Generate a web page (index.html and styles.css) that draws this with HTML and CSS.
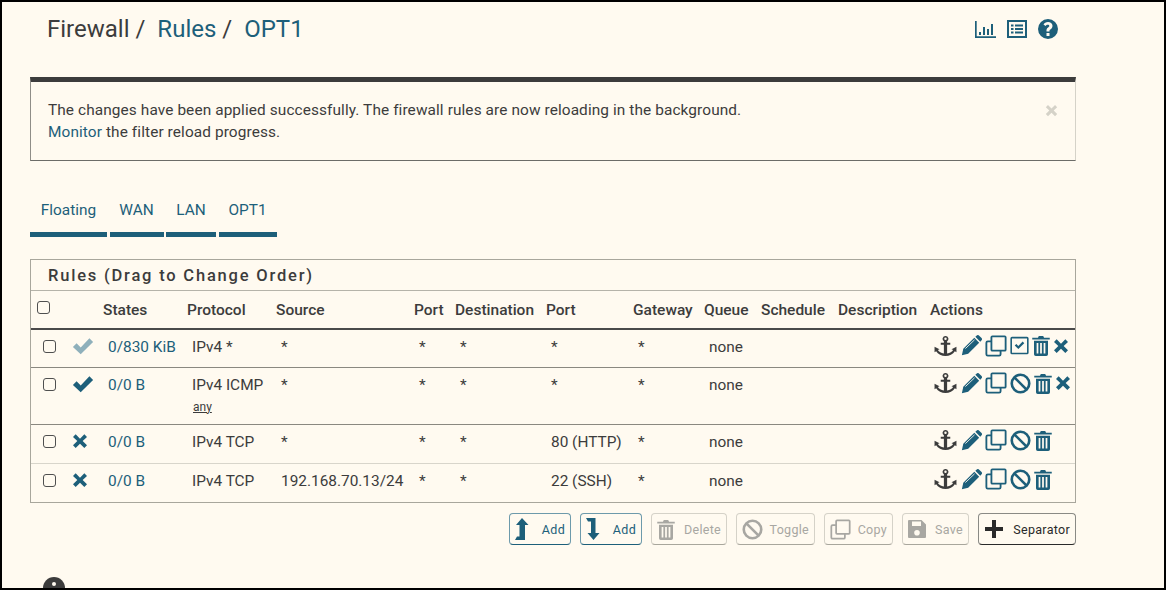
FILE: index.html

```html
<!doctype html>
<html>
<head>
    <title>Firewall: Rules: OPT1</title>
    <link rel="stylesheet" href="styles.css">
</head>
<body>
    <svg class="defs" width="0" height="0">
        <symbol id="i-check" viewBox="0 0 24 24"><polygon points="1,13 5,9 9.500,13.500 19,3.500 23,7.500 9.500,21"/></symbol>
        <symbol id="i-times" viewBox="0 0 24 24"><polygon points="5.500,2 12,8.500 18.500,2 22.500,6 16,12 22.500,18.500 18.500,22.500 12,16 5.500,22.500 1.500,18.500 8,12 1.500,6"/></symbol>
        <symbol id="i-anchor" viewBox="0 0 24 21"><path fill-rule="evenodd" d="M12 0a3 3 0 0 1 1.700 5.500V7H17V9.300H13.700V18.400C16.500 18 19 16.800 20 14.800L18.300 13.800 23.500 11.200V17L21.800 16C20 19 16 21 12 21S4 19 2.200 16L.5 17V11.200L5.700 13.800 4 14.800C5 16.800 7.500 18 10.300 18.400V9.300H7V7H10.300V5.500A3 3 0 0 1 12 0ZM12 1.700A1.300 1.300 0 1 0 12 4.300 1.300 1.300 0 0 0 12 1.700Z"/></symbol>
        <symbol id="i-pencil" viewBox="0 0 24 24"><path d="M1 23 2.600 15.800 15.200 3.200 20.800 8.800 8.200 21.400ZM16.400 2 18 .5C18.800-.2 19.800-.2 20.500.5L23.500 3.500C24.200 4.200 24.200 5.200 23.500 6L22 7.600Z"/><path class="cut" d="M5 15.500 15.500 5.500"/></symbol>
        <symbol id="i-clone" viewBox="0 0 24 24"><path class="line" d="M8 1.500H21.500A1 1 0 0 1 22.500 2.500V16A1 1 0 0 1 21.500 17H8A1 1 0 0 1 7 16V2.500A1 1 0 0 1 8 1.500ZM7 7H3A1.500 1.500 0 0 0 1.500 8.500V21A1.500 1.500 0 0 0 3 22.500H15.500A1.500 1.500 0 0 0 17 21V17"/></symbol>
        <symbol id="i-square-check" viewBox="0 0 24 24"><rect class="line" x="1.500" y="2" width="21" height="20" rx="1"/><polygon points="6,12 8,10 10.500,12.500 16,7 18,9 10.500,16.500"/></symbol>
        <symbol id="i-ban" viewBox="0 0 24 24"><circle class="line thick" cx="12" cy="12" r="10"/><path class="line thick" d="M5 5 19 19"/></symbol>
        <symbol id="i-trash" viewBox="0 0 20 24"><path fill-rule="evenodd" d="M0 3H6.500L7.500 1H12.500L13.500 3H20V5.200H0ZM2 6.500H18V22A2 2 0 0 1 16 24H4A2 2 0 0 1 2 22ZM5 9V21H7V9ZM9 9V21H11V9ZM13 9V21H15V9Z"/></symbol>
        <symbol id="i-up" viewBox="0 0 14 22"><polygon points="7,0 13.500,7 10,7 10,22 0,22 2,18.500 4.500,18.500 4.500,7 1,7"/></symbol>
        <symbol id="i-down" viewBox="0 0 14 22"><polygon points="0,0 9.500,0 9.500,15 13.500,15 7.500,22 1.500,15 5,15 5,3.500 2,3.500"/></symbol>
        <symbol id="i-plus" viewBox="0 0 18 18"><polygon points="7,0 11,0 11,7 18,7 18,11 11,11 11,18 7,18 7,11 0,11 0,7 7,7"/></symbol>
        <symbol id="i-save" viewBox="0 0 18 18"><path fill-rule="evenodd" d="M1 0H13.500L18 4.500V17A1 1 0 0 1 17 18H1A1 1 0 0 1 0 17V1A1 1 0 0 1 1 0ZM4 1.500V6H13V1.500ZM9 10A2.800 2.800 0 1 0 9 15.600 2.800 2.800 0 0 0 9 10Z"/></symbol>
    </svg>

    <div class="page">
        <header class="page-head">
            <h1 class="crumbs">
                <span>Firewall /</span>
                <a href="#">Rules <span>/</span></a>
                <a href="#">OPT1</a>
            </h1>
            <div class="head-icons">
                <svg class="head-icon chart" viewBox="0 0 21 17"><path d="M.7 0V16.300H21" class="line"/><path d="M4 11H6V14H4ZM8 6H10V14H8ZM12 8H14V14H12ZM16 3H18V14H16Z"/></svg>
                <svg class="head-icon list" viewBox="0 0 20 18"><rect class="line" x="1" y="1" width="18" height="16"/><path d="M4 4.500H6.500V6.500H4ZM8 4.500H16V6.500H8ZM4 8H6.500V10H4ZM8 8H16V10H8ZM4 11.500H6.500V13.500H4ZM8 11.500H16V13.500H8Z"/></svg>
                <svg class="head-icon help" viewBox="0 0 20 20"><path fill-rule="evenodd" d="M10 0A10 10 0 1 1 10 20 10 10 0 0 1 10 0ZM8.500 14V17H11.500V14ZM10 3C7.800 3 6.300 4 5.500 5.600L7.600 7.100C8.100 6.300 8.800 5.800 9.800 5.800 10.700 5.800 11.300 6.200 11.300 6.900 11.300 8.200 8.500 8.500 8.500 11.300V12.500H11.500V11.800C11.500 10.500 14.500 10 14.500 6.800 14.500 4.400 12.300 3 10 3Z"/></svg>
            </div>
        </header>

        <div class="alert">
            <button class="alert__close" type="button"><svg class="ico"><use href="#i-times"/></svg></button>
            <p>The changes have been applied successfully. The firewall rules are now reloading in the background.<br><a href="#">Monitor</a> the filter reload progress.</p>
        </div>

        <ul class="tabs">
            <li class="tabs__item tabs__item--floating"><a href="#">Floating</a></li>
            <li class="tabs__item tabs__item--wan"><a href="#">WAN</a></li>
            <li class="tabs__item tabs__item--lan"><a href="#">LAN</a></li>
            <li class="tabs__item tabs__item--opt"><a href="#">OPT1</a></li>
        </ul>

        <section class="panel">
            <h2 class="panel__title">Rules (Drag to Change Order)</h2>
            <table class="rules">
                <colgroup>
                    <col class="c-check"><col class="c-status"><col class="c-states"><col class="c-proto"><col class="c-source"><col class="c-port"><col class="c-dest"><col class="c-dport"><col class="c-gw"><col class="c-queue"><col class="c-sched"><col class="c-desc"><col class="c-actions">
                </colgroup>
                <thead>
                    <tr>
                        <th class="head-check"><input type="checkbox" class="box"></th>
                        <th></th>
                        <th>States</th>
                        <th>Protocol</th>
                        <th>Source</th>
                        <th>Port</th>
                        <th>Destination</th>
                        <th>Port</th>
                        <th>Gateway</th>
                        <th>Queue</th>
                        <th>Schedule</th>
                        <th>Description</th>
                        <th>Actions</th>
                    </tr>
                </thead>
                <tbody>
                    <tr>
                        <td class="cell-check"><input type="checkbox" class="box"></td>
                        <td><svg class="status status--off"><use href="#i-check"/></svg></td>
                        <td><a href="#">0/830 KiB</a></td>
                        <td>IPv4 *</td>
                        <td>*</td>
                        <td>*</td>
                        <td>*</td>
                        <td>*</td>
                        <td>*</td>
                        <td>none</td>
                        <td></td>
                        <td></td>
                        <td class="cell-actions">
                            <div class="actions">
                                <svg class="act act--anchor"><use href="#i-anchor"/></svg>
                                <svg class="act act--pencil"><use href="#i-pencil"/></svg>
                                <svg class="act act--clone"><use href="#i-clone"/></svg>
                                <svg class="act act--tick"><use href="#i-square-check"/></svg>
                                <svg class="act act--trash"><use href="#i-trash"/></svg>
                                <svg class="act act--times"><use href="#i-times"/></svg>
                            </div>
                        </td>
                    </tr>
                    <tr class="row-tall">
                        <td class="cell-check"><input type="checkbox" class="box"></td>
                        <td><svg class="status"><use href="#i-check"/></svg></td>
                        <td><a href="#">0/0 B</a></td>
                        <td>IPv4 ICMP<br><u class="sub">any</u></td>
                        <td>*</td>
                        <td>*</td>
                        <td>*</td>
                        <td>*</td>
                        <td>*</td>
                        <td>none</td>
                        <td></td>
                        <td></td>
                        <td class="cell-actions">
                            <div class="actions">
                                <svg class="act act--anchor"><use href="#i-anchor"/></svg>
                                <svg class="act act--pencil"><use href="#i-pencil"/></svg>
                                <svg class="act act--clone"><use href="#i-clone"/></svg>
                                <svg class="act act--ban"><use href="#i-ban"/></svg>
                                <svg class="act act--trash"><use href="#i-trash"/></svg>
                                <svg class="act act--times"><use href="#i-times"/></svg>
                            </div>
                        </td>
                    </tr>
                    <tr class="row-wide">
                        <td class="cell-check"><input type="checkbox" class="box"></td>
                        <td><svg class="status status--x"><use href="#i-times"/></svg></td>
                        <td><a href="#">0/0 B</a></td>
                        <td>IPv4 TCP</td>
                        <td>*</td>
                        <td>*</td>
                        <td>*</td>
                        <td>80 (HTTP)</td>
                        <td>*</td>
                        <td>none</td>
                        <td></td>
                        <td></td>
                        <td class="cell-actions">
                            <div class="actions">
                                <svg class="act act--anchor"><use href="#i-anchor"/></svg>
                                <svg class="act act--pencil"><use href="#i-pencil"/></svg>
                                <svg class="act act--clone"><use href="#i-clone"/></svg>
                                <svg class="act act--ban"><use href="#i-ban"/></svg>
                                <svg class="act act--trash"><use href="#i-trash"/></svg>
                            </div>
                        </td>
                    </tr>
                    <tr>
                        <td class="cell-check"><input type="checkbox" class="box"></td>
                        <td><svg class="status status--x"><use href="#i-times"/></svg></td>
                        <td><a href="#">0/0 B</a></td>
                        <td>IPv4 TCP</td>
                        <td>192.168.70.13/24</td>
                        <td>*</td>
                        <td>*</td>
                        <td>22 (SSH)</td>
                        <td>*</td>
                        <td>none</td>
                        <td></td>
                        <td></td>
                        <td class="cell-actions">
                            <div class="actions">
                                <svg class="act act--anchor"><use href="#i-anchor"/></svg>
                                <svg class="act act--pencil"><use href="#i-pencil"/></svg>
                                <svg class="act act--clone"><use href="#i-clone"/></svg>
                                <svg class="act act--ban"><use href="#i-ban"/></svg>
                                <svg class="act act--trash"><use href="#i-trash"/></svg>
                            </div>
                        </td>
                    </tr>
                </tbody>
            </table>
        </section>

        <div class="toolbar">
            <button class="btn btn--add" type="button"><svg class="btn__ico btn__ico--arrow"><use href="#i-up"/></svg>Add</button>
            <button class="btn btn--add" type="button"><svg class="btn__ico btn__ico--arrow"><use href="#i-down"/></svg>Add</button>
            <button class="btn btn--off btn--delete" type="button"><svg class="btn__ico btn__ico--trash"><use href="#i-trash"/></svg>Delete</button>
            <button class="btn btn--off btn--toggle" type="button"><svg class="btn__ico btn__ico--ban"><use href="#i-ban"/></svg>Toggle</button>
            <button class="btn btn--off btn--copy" type="button"><svg class="btn__ico btn__ico--clone"><use href="#i-clone"/></svg>Copy</button>
            <button class="btn btn--off btn--save" type="button"><svg class="btn__ico btn__ico--save"><use href="#i-save"/></svg>Save</button>
            <button class="btn btn--sep" type="button"><svg class="btn__ico btn__ico--plus"><use href="#i-plus"/></svg>Separator</button>
        </div>

        <div class="info-mark"></div>
    </div>
</body>
</html>
```

FILE: styles.css

```css
* {
    box-sizing: border-box;
}

html, body {
    margin: 0;
    height: 100%;
    overflow: hidden;
}

body {
    background: #fffaf0;
    color: #3c3c3c;
    font-family: Roboto, "Liberation Sans", sans-serif;
    font-size: 15.400px;
}

a {
    color: #1d5f7a;
    text-decoration: none;
}

.defs {
    position: absolute;
}

.line {
    fill: none;
    stroke: currentColor;
    stroke-width: 2;
}

.line.thick {
    stroke-width: 3;
}

.cut {
    fill: none;
    stroke: #fffaf0;
    stroke-width: 1;
}

.page {
    width: 1166px;
    height: 590px;
    border: 2px solid #000;
    padding: 0 88px 0 28px;
    overflow: hidden;
}

/*-------- Header --------*/

.page-head {
    display: flex;
    justify-content: space-between;
    height: 75px;
}

.crumbs {
    margin: 12px 0 0 17px;
    font-size: 24px;
    font-weight: 400;
    line-height: 30px;
    display: flex;
    gap: 12px;
}

.crumbs span {
    color: #3c3c3c;
}

.head-icons {
    display: flex;
    align-items: center;
    gap: 11px;
    height: 20px;
    margin: 17px 18px 0 0;
    color: #1d5f7a;
}

.head-icon {
    fill: currentColor;
    display: block;
}

.chart {
    width: 21px;
    height: 17px;
}

.list {
    width: 20px;
    height: 18px;
}

.help {
    width: 20px;
    height: 20px;
}

/*-------- Alert --------*/

.alert {
    position: relative;
    height: 84px;
    border: 1px solid #d5d2c8;
    border-top: 5px solid #3c3c3c;
    border-bottom-color: #6c6c68;
    border-left-color: #8f8d87;
    padding: 17px 17px;
    line-height: 22px;
    letter-spacing: .1px;
}

.alert p {
    margin: 0;
}

.alert__close {
    position: absolute;
    top: 22px;
    right: 17px;
    width: 13px;
    height: 13px;
    padding: 0;
    border: 0;
    background: none;
    color: #d5d2c8;
}

.ico {
    display: block;
    width: 13px;
    height: 13px;
    fill: currentColor;
}

/*-------- Tabs --------*/

.tabs {
    display: flex;
    gap: 2.500px;
    margin: 32px 0 0;
    padding: 0;
    list-style: none;
}

.tabs__item {
    border-bottom: 5px solid #1d5f7a;
    height: 44px;
    padding-top: 7px;
    line-height: 20px;
    text-align: center;
}

.tabs__item--floating { width: 77px; }
.tabs__item--wan { width: 54px; }
.tabs__item--lan { width: 50px; }
.tabs__item--opt { width: 58px; }

/*-------- Rules table --------*/

.panel {
    margin-top: 22px;
    border: 1px solid #a8a69c;
    height: 244px;
}

.panel__title {
    margin: 0;
    height: 31px;
    padding-left: 17px;
    border-bottom: 1px solid #b5b3a9;
    font-size: 16.500px;
    font-weight: 500;
    line-height: 31px;
    letter-spacing: 1.800px;
}

.rules {
    width: 1044px;
    table-layout: fixed;
    border-collapse: collapse;
}

.c-check { width: 35px; }
.c-status { width: 37px; }
.c-states { width: 84px; }
.c-proto { width: 89px; }
.c-source { width: 138px; }
.c-port { width: 41px; }
.c-dest { width: 91px; }
.c-dport { width: 87px; }
.c-gw { width: 71px; }
.c-queue { width: 57px; }
.c-sched { width: 77px; }
.c-desc { width: 92px; }
.c-actions { width: 145px; }

.rules th {
    height: 38px;
    padding: 0;
    border-bottom: 2px solid #4a4a4a;
    font-size: 15.500px;
    font-weight: 500;
    text-align: left;
    vertical-align: middle;
    white-space: nowrap;
}

.rules th.head-check {
    padding: 0 0 4px 6px;
}

.rules td {
    padding: 7px 0 0 5px;
    border-bottom: 1px solid #8a8880;
    font-size: 15.400px;
    line-height: 20px;
    height: 38px;
    vertical-align: top;
    white-space: nowrap;
}

.rules tr:last-child td {
    border-bottom: 0;
}

.rules .row-wide td {
    height: 39px;
    border-bottom-color: #d8d5cb;
}

.rules .row-tall td {
    height: 57px;
}

.rules td.cell-check {
    padding: 10px 0 0 12px;
}

.rules td.cell-actions {
    padding: 5px 0 0 4px;
}

.sub {
    display: inline-block;
    margin: 4px 0 0 1px;
    font-size: 12px;
    line-height: 16px;
}

.box {
    display: block;
    margin: 0;
    width: 13px;
    height: 13px;
    appearance: none;
    background: transparent;
    border: 1.500px solid #4f4f4f;
    border-radius: 3px;
}

.status {
    display: block;
    width: 22px;
    height: 22px;
    margin: -2px 0 0 1px;
    fill: #1d5f7a;
}

.status--off {
    fill: #8fb0bb;
}

.status--x {
    width: 16px;
    height: 16px;
    margin-top: 1px;
}

.actions {
    display: flex;
    align-items: center;
    gap: 3.500px;
    height: 21px;
    color: #1d5f7a;
}

.act {
    display: block;
    flex: none;
    fill: currentColor;
}

.act--anchor {
    width: 23px;
    height: 20px;
    fill: #3c3c3c;
}

.act--pencil,
.act--ban {
    width: 21px;
    height: 21px;
}

.act--clone {
    width: 22px;
    height: 22px;
    margin: 0 -.5px;
}

.act--tick {
    width: 19px;
    height: 19px;
}

.act--trash {
    width: 18px;
    height: 21px;
}

.act--times {
    width: 16px;
    height: 16px;
    margin-left: -1px;
}

/*-------- Buttons --------*/

.toolbar {
    display: flex;
    justify-content: flex-end;
    gap: 9px;
    margin-top: 10px;
}

.btn {
    display: flex;
    align-items: center;
    justify-content: space-between;
    height: 32px;
    padding: 0 5px;
    border: 1px solid #6d9aab;
    border-bottom-color: #1d5f7a;
    border-radius: 4px;
    background: transparent;
    color: #1d5f7a;
    font-family: inherit;
    font-size: 12.500px;
    letter-spacing: .3px;
}

.btn--add { width: 62px; }
.btn--delete { width: 76px; }
.btn--toggle { width: 79px; }
.btn--copy { width: 69px; }
.btn--save { width: 67px; }
.btn--sep { width: 98px; }

.btn--off {
    border-color: #d5d2c8;
    border-bottom-color: #a8a69c;
    color: #a8a7a2;
}

.btn--sep {
    border-color: #8a8a85;
    border-bottom-color: #2a2a2a;
    color: #2a2a2a;
}

.btn__ico {
    display: block;
    flex: none;
    fill: currentColor;
}

.btn__ico--arrow {
    width: 14px;
    height: 22px;
}

.btn__ico--trash {
    width: 18px;
    height: 21px;
}

.btn__ico--ban,
.btn__ico--clone {
    width: 21px;
    height: 21px;
}

.btn__ico--save {
    width: 18px;
    height: 18px;
}

.btn__ico--plus {
    width: 18px;
    height: 18px;
    margin-left: 1px;
}

/*-------- Bottom info mark --------*/

.info-mark {
    position: relative;
    width: 22px;
    height: 22px;
    margin: 32px 0 0 13px;
    border-radius: 50%;
    background: #3c3c3c;
}

.info-mark::before {
    content: "";
    position: absolute;
    top: 5px;
    left: 9px;
    width: 4px;
    height: 4px;
    border-radius: 50%;
    background: #fffaf0;
}
```
